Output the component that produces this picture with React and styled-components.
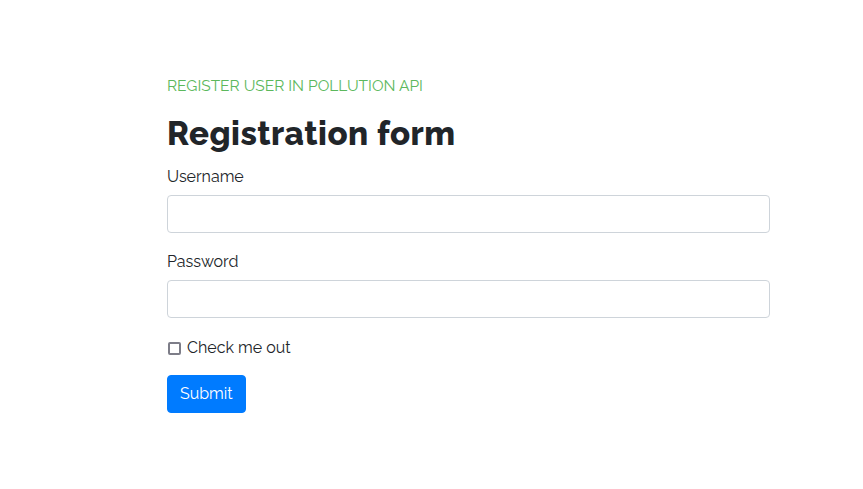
import React from 'react';
import styled, { createGlobalStyle } from 'styled-components';

const GlobalStyle = createGlobalStyle`
  body {
    margin: 0;
    background: #fff;
    font-family: Raleway, Lato, "Open Sans", sans-serif;
    color: #212529;
    font-size: 16px;
    line-height: 1.5;
  }
  * { box-sizing: border-box; }
`;

const Page = styled.div`
  padding: 75px 0 0 167px;
`;

const Form = styled.form`
  width: 603px;
`;

const Kicker = styled.p`
  margin: 0 0 19px;
  font-size: 15.5px;
  line-height: 21px;
  color: #5cb85c;
  text-transform: uppercase;
`;

const Title = styled.h2`
  margin: 0 0 12px;
  font-size: 33px;
  font-weight: 800;
  letter-spacing: 0.5px;
  line-height: 38px;
  color: #212529;
`;

const Group = styled.div`
  margin-bottom: ${props => props.$gap || 16}px;
`;

const Label = styled.label`
  display: inline-block;
  margin-bottom: 6px;
  color: #212529;
`;

const Input = styled.input`
  display: block;
  width: 100%;
  height: 38px;
  padding: 6px 12px;
  font: inherit;
  color: #495057;
  background: #fff;
  border: 1px solid #ced4da;
  border-radius: 4px;
  outline: none;
`;

const Check = styled.label`
  display: flex;
  align-items: center;
  gap: 6px;
  color: #212529;
`;

const Box = styled.input`
  appearance: none;
  width: 13px;
  height: 13px;
  margin: 1px 0 0 1px;
  border: 2px solid #7d7d88;
  border-radius: 2px;
  background: #fff;
`;

const Button = styled.button`
  height: 38px;
  padding: 6px 12px;
  font: inherit;
  color: #fff;
  background: #007bff;
  border: 1px solid #007bff;
  border-radius: 4px;
`;

export default function App() {
  return (
    <>
      <GlobalStyle />
      <Page>
        <Form onSubmit={e => e.preventDefault()}>
          <Kicker>Register user in pollution API</Kicker>
          <Title>Registration form</Title>
          <Group $gap={17}>
            <Label htmlFor="username">Username</Label>
            <Input id="username" type="text" />
          </Group>
          <Group $gap={18}>
            <Label htmlFor="password">Password</Label>
            <Input id="password" type="password" />
          </Group>
          <Group $gap={15}>
            <Check>
              <Box type="checkbox" />
              Check me out
            </Check>
          </Group>
          <Button type="submit">Submit</Button>
        </Form>
      </Page>
    </>
  );
}
